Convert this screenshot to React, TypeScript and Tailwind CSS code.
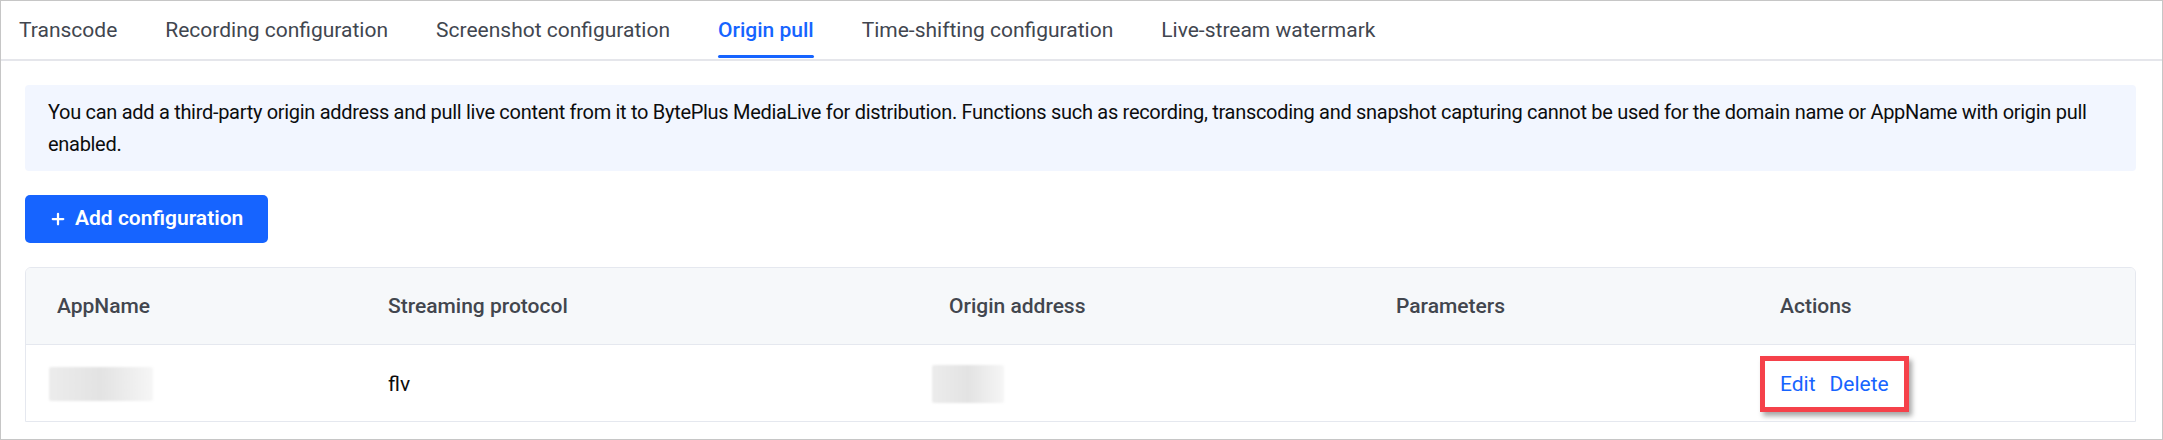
import { Plus } from 'lucide-react';

const tabs = [
  'Transcode',
  'Recording configuration',
  'Screenshot configuration',
  'Origin pull',
  'Time-shifting configuration',
  'Live-stream watermark',
];

const columns = ['AppName', 'Streaming protocol', 'Origin address', 'Parameters', 'Actions'];

const gridCols = 'grid grid-cols-[331px_561px_447px_384px_1fr]';

const Blur = ({ className }: { className: string }) => (
  <div className={`rounded-[2px] bg-gradient-to-r from-[#ececec] via-[#e3e3e3] to-[#f6f6f6] blur-[1px] ${className}`} />
);

export default function App() {
  return (
    <div
      className="h-[440px] w-[2163px] overflow-hidden border border-[#c6c6c6] bg-white text-[21px]"
      style={{ fontFamily: 'Roboto, "Liberation Sans", sans-serif' }}
    >
      {/* tabs */}
      <div className="flex h-[60px] gap-[48px] border-b-2 border-[#e5e6eb] pl-[18px]">
        {tabs.map((tab) => {
          const active = tab === 'Origin pull';
          return (
            <div
              key={tab}
              className={`relative flex items-center pt-[2px] ${active ? 'font-medium text-[#1664ff]' : 'text-[#41464f]'}`}
            >
              {tab}
              {active && <span className="absolute bottom-[1px] left-0 right-0 h-[3px] rounded-full bg-[#1664ff]" />}
            </div>
          );
        })}
      </div>

      <div className="pl-6 pr-[26px] pt-[24px]">
        {/* notice */}
        <div className="rounded-[4px] bg-[#f2f6ff] py-[11px] pl-[23px] pr-[16px] text-[20px] leading-[32px] tracking-[-0.3px] text-[#0c0d0e]">
          You can add a third-party origin address and pull live content from it to BytePlus MediaLive for distribution.
          Functions such as recording, transcoding and snapshot capturing cannot be used for the domain name or AppName
          with origin pull enabled.
        </div>

        {/* add button */}
        <button className="mt-[24px] flex h-[48px] w-[243px] items-center gap-[8px] rounded-[5px] bg-[#1664ff] pl-[24px] font-semibold text-white">
          <Plus size={18} strokeWidth={3} />
          Add configuration
        </button>

        {/* table */}
        <div className="mt-[24px] overflow-hidden rounded-t-[6px] border border-[#e5e8ef]">
          <div className={`${gridCols} h-[77px] items-center border-b border-[#e5e8ef] bg-[#f6f8fa] pt-[2px] font-medium text-[#42464e]`}>
            {columns.map((c) => (
              <div key={c} className="pl-[31px]">
                {c}
              </div>
            ))}
          </div>
          <div className={`${gridCols} h-[76px] items-center pt-[2px] text-[#0c0d0e]`}>
            <div className="pl-[23px]">
              <Blur className="h-[34px] w-[104px]" />
            </div>
            <div className="pl-[31px] pt-[2px]">flv</div>
            <div className="pl-[14px]">
              <Blur className="h-[38px] w-[72px]" />
            </div>
            <div />
            <div className="pl-[31px]">
              <div className="-ml-[20px] inline-flex h-[56px] items-center gap-[14px] border-[5px] border-[#f5414a] px-[15px] pt-[2px] text-[#1664ff] shadow-[3px_4px_5px_rgba(0,0,0,0.35)]">
                <span>Edit</span>
                <span>Delete</span>
              </div>
            </div>
          </div>
        </div>
      </div>
    </div>
  );
}
